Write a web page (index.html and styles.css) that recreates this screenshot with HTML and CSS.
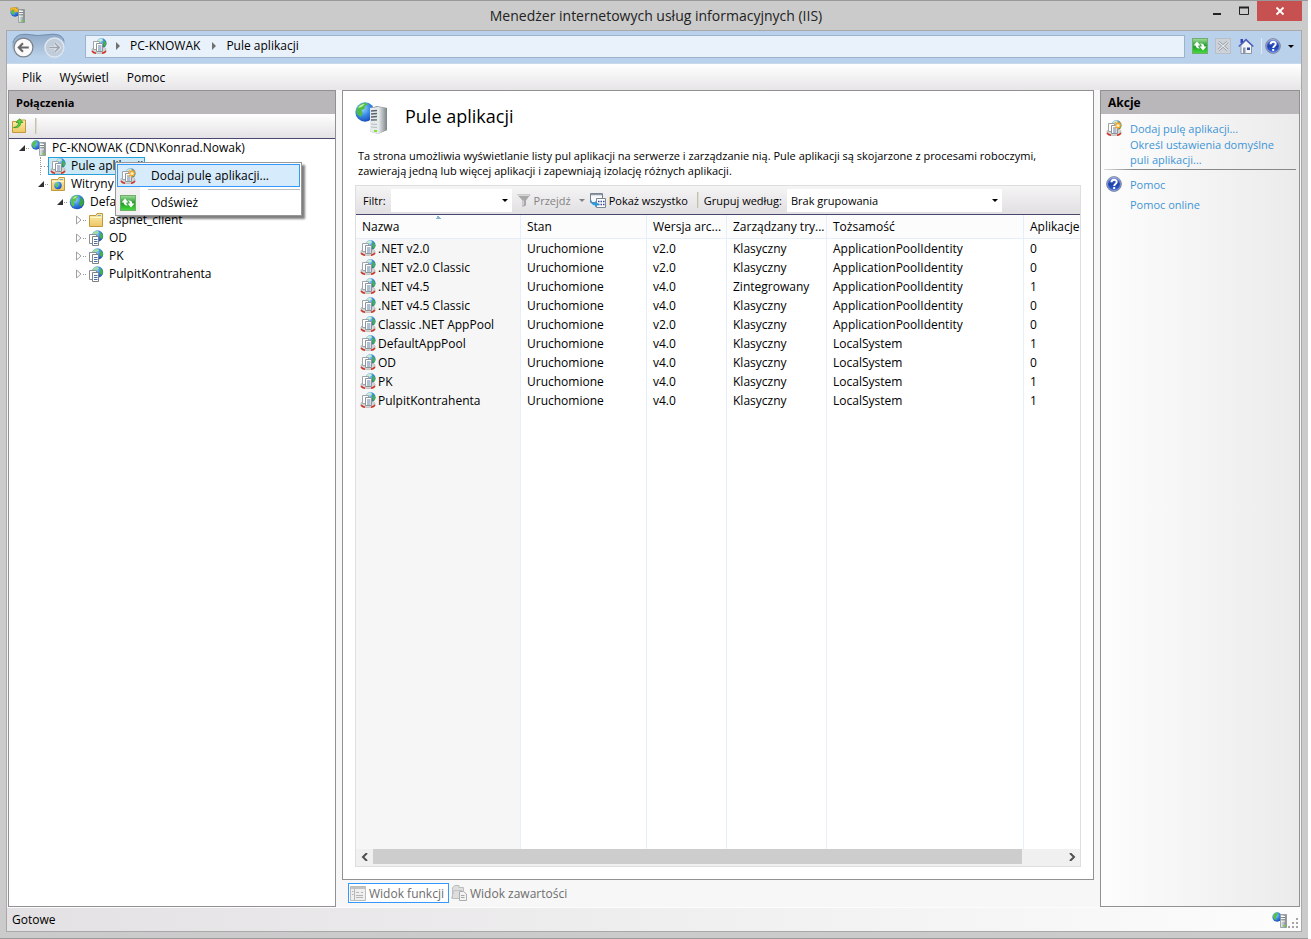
FILE: index.html
```html
<!DOCTYPE html>
<html lang="pl">
<head>
  <meta charset="UTF-8" />
  <meta name="viewport" content="width=device-width, initial-scale=1.0"/>
  <title>Menedżer internetowych usług informacyjnych (IIS)</title>
  <link rel="stylesheet" href="styles.css">
</head>
<body>
  <svg class="sprite" aria-hidden="true">
    <defs>
      <radialGradient id="sea" cx="0.35" cy="0.3" r="0.8">
        <stop offset="0" stop-color="#a5e0ff"/>
        <stop offset="0.5" stop-color="#3a8ae6"/>
        <stop offset="1" stop-color="#1240b4"/>
      </radialGradient>
      <linearGradient id="steel" x1="0" x2="1">
        <stop offset="0" stop-color="#eef1f3"/>
        <stop offset="0.5" stop-color="#b4babd"/>
        <stop offset="1" stop-color="#7b8284"/>
      </linearGradient>
      <linearGradient id="folderFill" x1="0" y1="0" x2="0" y2="1">
        <stop offset="0" stop-color="#fdeeae"/>
        <stop offset="1" stop-color="#ecc664"/>
      </linearGradient>
      <linearGradient id="greenFill" x1="0" y1="0" x2="0" y2="1">
        <stop offset="0" stop-color="#a5dd9f"/>
        <stop offset="0.5" stop-color="#1f9a28"/>
        <stop offset="1" stop-color="#45dd3c"/>
      </linearGradient>
      <linearGradient id="helpFill" x1="0" y1="0" x2="0" y2="1">
        <stop offset="0" stop-color="#7490e0"/>
        <stop offset="0.5" stop-color="#1c3fae"/>
        <stop offset="1" stop-color="#3b66d8"/>
      </linearGradient>
      <linearGradient id="capsuleFill" x1="0" y1="0" x2="0" y2="1">
        <stop offset="0" stop-color="#8fa9c8"/>
        <stop offset="0.5" stop-color="#a6bed9"/>
        <stop offset="1" stop-color="#c0d6ed"/>
      </linearGradient>
    </defs>
    <symbol id="globe" viewBox="0 0 16 16">
      <circle cx="8" cy="8" r="7.3" fill="url(#sea)"/>
      <path d="M2 5.500C3 2.500 6 1 8.500 1.200L9.500 3 7.500 4.500 7 7 4.500 7.500 5.500 10 4.500 13 2 10Z" fill="#5cc24a"/>
      <path d="M11 2.500 14 5.500 15 8.500 12.500 12.500 10.500 11.500 10 8.500 11.500 6.500Z" fill="#3aa53a"/>
      <path d="M3.500 5C5 2.500 7 2 8.500 2.200L6.500 4Z" fill="#d2f2b8"/>
    </symbol>
    <symbol id="server" viewBox="0 0 16 16">
      <circle cx="5" cy="5" r="4.700" fill="url(#sea)"/>
      <path d="M1 4C2 1.500 4 .5 6 .6L5.500 3 4 5 4.500 8 2 7Z" fill="#58c04a"/>
      <path d="M8.500 2.500H14.500V15.500H8.500Z" fill="url(#steel)" stroke="#8d9396" stroke-width=".8"/>
      <path d="M9 4.500H13M9 6.700H13M9 9H13" stroke="#fff"/>
      <path d="M9 5.500H13M9 7.800H13" stroke="#5f686c" stroke-width=".7"/>
      <rect x="11.500" y="13" width="2" height="1.500" fill="#5fe02a"/>
    </symbol>
    <symbol id="appicon" viewBox="0 0 16 16">
      <use href="#server"/>
      <path d="M0 1.500 5 0 7 2 8 0V5H3.500L5 3.500 3 2.500 1 4Z" fill="#f3b72e" stroke="#c98a10" stroke-width=".4"/>
    </symbol>
    <symbol id="serverbig" viewBox="0 0 32 33">
      <circle cx="10" cy="10" r="9.700" fill="url(#sea)"/>
      <path d="M1.500 8C3 3 7 .8 11 .8L13 2.500 10 4 9.500 7 6.500 8 7.500 12 5.500 15 2 12Z" fill="#4fbd43"/>
      <path d="M3 6C5 3 7 2 10 2L6.500 5Z" fill="#d0f3b8"/>
      <path d="M15 6 22 4 32 6V28L23 32 15 29.500Z" fill="#8b9294"/>
      <path d="M15 6 23 5V32L15 29.500Z" fill="#e5eaec"/>
      <path d="M23 5 32 6V28L23 32Z" fill="url(#steel)"/>
      <path d="M16 9 22 8.500M16 12 22 11.500M16 15 22 14.500M16 18 22 17.800" stroke="#59656b" stroke-width="1.300"/>
      <path d="M16 22 22 22.500M16 25 22 25.500" stroke="#b6bec2"/>
      <rect x="19" y="28" width="3" height="2" fill="#7be62d"/>
    </symbol>
    <symbol id="pages" viewBox="0 0 16 16">
      <path d="M1.500 4.500H8.500V13.500H1.500Z" fill="#fff" stroke="#8b9195"/>
      <path d="M4.500 6.500H10.500V15.500H4.500Z" fill="#fff" stroke="#7c8387"/>
      <path d="M6 9.500H9.500M6 11.500H9.500M6 13.500H9.500" stroke="#4c70a4"/>
    </symbol>
    <symbol id="pool" viewBox="0 0 16 16">
      <circle cx="10.500" cy="5.200" r="5" fill="url(#sea)"/>
      <path d="M5.700 4C7 1.500 9 .4 11 .4L12 2.500 9.500 3.500Z" fill="#c7ecd0"/>
      <path d="M12.500 2 15 4V8L12.500 9Z" fill="#43b247"/>
      <path d="M2.500 9.500C-1 12 1.500 15.500 8 15.500S17 12 13.500 9.500Z" fill="#d3d5d6" stroke="#a9a9a9" stroke-width=".6"/>
      <path d="M1 13C2 14.500 3 15 5 15.300M11 15.300C13 15 14 14.500 15 13" fill="none" stroke="#cf3527" stroke-width="1.500"/>
      <path d="M2.500 3.500H8.500V11.500H2.500Z" fill="#fff" stroke="#9fa4a8"/>
      <path d="M5.500 5.500H11.500V13.500H5.500Z" fill="#fff" stroke="#8e9498"/>
      <path d="M7 8H10.500M7 10H10.500M7 12H10.500" stroke="#4c6f9c" stroke-width=".9"/>
    </symbol>
    <symbol id="pooladd" viewBox="0 0 16 16">
      <use href="#pool"/>
      <path d="M12 0 12.800 3 15.500 1.800 14.200 4.300 16 5.500 14 6.500 15 9 12.700 7.800 12 10.500 11 7.800 8.500 9 9.800 6.500 8 5.500 9.800 4.400 8.600 1.800 11.200 3Z" fill="#f8a531"/>
      <circle cx="12" cy="5.500" r="1.600" fill="#fff0b4"/>
    </symbol>
    <symbol id="app" viewBox="0 0 16 16">
      <circle cx="9.500" cy="6" r="5.700" fill="url(#sea)"/>
      <path d="M4.500 4C6 1.500 8 .6 10 .7L11 3 8 4Z" fill="#9fdd9a"/>
      <path d="M12 2 15 5 14.500 9 12 8Z" fill="#43b247"/>
      <use href="#pages"/>
    </symbol>
    <symbol id="folder" viewBox="0 0 16 16">
      <path d="M1.500 3.500H8L9 1.500H14.500V14.500H1.500Z" fill="url(#folderFill)" stroke="#c29a3d"/>
      <path d="M9.500 3.500H13" stroke="#7fa8c4"/>
      <path d="M2 5.500H14" stroke="#fff6cf"/>
    </symbol>
    <symbol id="sites" viewBox="0 0 16 16">
      <use href="#folder"/>
      <circle cx="8" cy="9.500" r="3.700" fill="url(#sea)"/>
      <path d="M5 8.500 8 6.300 8.500 8.500 7 12Z" fill="#65ca4e"/>
    </symbol>
    <symbol id="connect" viewBox="0 0 16 16">
      <path d="M1.500 3.500H6L7 2H14.500V14.500H1.500Z" fill="url(#folderFill)" stroke="#c29a3d"/>
      <path d="M2.500 9.500C6 9 7.500 7 7.500 4.500H5L8.800.8 12 4.500H9.800C9.800 8 7 10.500 2.500 9.500Z" fill="#55d23c" stroke="#2d8f23" stroke-width=".7"/>
    </symbol>
    <symbol id="refresh" viewBox="0 0 16 16">
      <rect x=".5" y=".5" width="15" height="15" fill="url(#greenFill)" stroke="#6fae6c"/>
      <path d="M1.500 7.500 5 3.500 8.500 7.500H6.300C6.300 9 7 9.800 8 10.300 5.500 10.800 3.700 9.600 3.700 7.500Z" fill="#fff"/>
      <path d="M14.500 8.500 11 12.500 7.500 8.500H9.700C9.700 7 9 6.200 8 5.700 10.500 5.200 12.300 6.400 12.300 8.500Z" fill="#fff"/>
    </symbol>
    <symbol id="stop" viewBox="0 0 16 16">
      <rect x=".5" y=".5" width="15" height="15" fill="#cdd2d8" stroke="#b7bfc9"/>
      <path d="M3.500 4 12.500 12M12.500 4 3.500 12" stroke="#9299a2" stroke-width="2.600"/>
      <path d="M3.500 4 12.500 12M12.500 4 3.500 12" stroke="#e5e8ec" stroke-width="1.200"/>
    </symbol>
    <symbol id="home" viewBox="0 0 16 16">
      <path d="M2.500 1H5V5H2.500Z" fill="#3443b8"/>
      <path d="M3 7.500 8 2.500 13.500 7.500V15.500H3Z" fill="#f3f5f8" stroke="#7d8594" stroke-width=".8"/>
      <path d="M.8 8.500 8 1.500 15.300 8.500" fill="none" stroke="#4a5cb8" stroke-width="1.500"/>
      <path d="M5 9.500H7.500V15H5Z" fill="#8d97ac"/>
      <path d="M9 9.500H12V12H9Z" fill="#2f48a0"/>
    </symbol>
    <symbol id="help" viewBox="0 0 16 16">
      <circle cx="8" cy="8" r="7.400" fill="url(#helpFill)" stroke="#8b919d"/>
      <circle cx="8" cy="8" r="6.400" fill="none" stroke="#c7d2f0" stroke-width=".6"/>
      <path d="M5.500 6.300C5.500 3 10.700 3 10.700 6 10.700 8 8.200 7.900 8.200 10" fill="none" stroke="#fff" stroke-width="1.900"/>
      <rect x="7.200" y="11" width="2" height="2" fill="#fff"/>
    </symbol>
    <symbol id="funnel" viewBox="0 0 16 16">
      <path d="M1 2.500H14.500L10 8.500V13.500L6.500 15V8.500Z" fill="#a8a8a8"/>
      <path d="M2 3.500H13" stroke="#d5d5d5"/>
      <path d="M7.500 8.500V13.500" stroke="#d0d0d0"/>
    </symbol>
    <symbol id="showall" viewBox="0 0 16 16">
      <path d="M.5 1.500H12.500V10.500H.5Z" fill="#f7f9fb" stroke="#73808a"/>
      <path d="M1 2.500H12" stroke="#8f9ba4" stroke-width="1.500"/>
      <path d="M6.500 6.500H15.500V15.500H6.500Z" fill="#fff" stroke="#7b8792"/>
      <path d="M8 9.500H14.500M8 12.500H14.500" stroke="#33449a" stroke-width="1.500" stroke-dasharray="1.500 1"/>
      <path d="M1 7.500C1.500 10 3 11 5 11V9L9 12.200 5 15.300V13.300C2 13.200.5 11 1 7.500Z" fill="#2b9bdc"/>
    </symbol>
    <symbol id="features" viewBox="0 0 16 16">
      <path d="M.5 1.500H15.500V15.500H.5Z" fill="#efefef" stroke="#bdbdbd"/>
      <path d="M.5 3H15.500" stroke="#c2c2c2" stroke-width="2"/>
      <path d="M4.500 4V15M6 7.500H9M6 10.500H13M6 12.500H13M11 7.500H13M2 6.500H3.500M2 9.500H3.500" stroke="#b5b5b5"/>
    </symbol>
    <symbol id="content" viewBox="0 0 16 16">
      <path d="M1.500 13.500V2.500L4 .5H8V2.500H12.500V13.500Z" fill="#dedede" stroke="#bdbdbd"/>
      <path d="M.5 13.500 3 5.500H11" fill="none" stroke="#c2c2c2"/>
      <path d="M8.500 6.500H12.500L15.500 9V15.500H8.500Z" fill="#f3f3f3" stroke="#adadad"/>
      <path d="M10 10.500H13.500M10 12.500H13.500" stroke="#a5a5a5"/>
    </symbol>
    <symbol id="closed" viewBox="0 0 8 10">
      <path d="M1.500 1 6 5 1.500 9Z" fill="#fff" stroke="#a0a0a0"/>
    </symbol>
    <symbol id="open" viewBox="0 0 8 10">
      <path d="M7 2V8H1Z" fill="#303030"/>
    </symbol>
  </svg>

  <div class="window">
    <header class="titlebar">
      <svg class="icon"><use href="#appicon"/></svg>
      <h1>Menedżer internetowych usług informacyjnych (IIS)</h1>
      <div class="controls">
        <button type="button" aria-label="Minimalizuj"><svg viewBox="0 0 12 12"><path d="M2 9H10" stroke="#222" stroke-width="2"/></svg></button>
        <button type="button" aria-label="Maksymalizuj"><svg viewBox="0 0 12 12"><path d="M1.500 3V9.500H10.500V3" fill="none" stroke="#222"/><path d="M1 2.500H11" stroke="#222" stroke-width="2"/></svg></button>
        <button type="button" class="close" aria-label="Zamknij"><svg viewBox="0 0 12 12"><path d="M2.500 2.500 9.500 9.500M9.500 2.500 2.500 9.500" stroke="#fff" stroke-width="1.800"/></svg></button>
      </div>
    </header>

    <div class="client">
      <div class="navbar">
        <div class="history">
          <svg class="capsule" viewBox="0 0 55 27"><path d="M12 1C18 0 21 2 27 2S38 0 45 1C53 2 54 8 54 13 54 21 49 26 43 26 36 26 34 23 27 23S19 26 12 26C5 26 1 20 1 13S5 2 12 1Z" fill="url(#capsuleFill)"/><path d="M2 10C4 3 8 1.500 12 1.500 18 1 21 2.500 27 2.500S38 1 45 1.500C49 2 52 4 53 8" fill="none" stroke="#7590b2"/></svg>
          <div class="history-buttons">
            <button type="button" aria-label="Wstecz"><svg viewBox="0 0 20 20"><circle cx="10" cy="10" r="9" fill="#fafafa" stroke="#7b838c" stroke-width="1.200"/><path d="M15 10H6M9.500 6 5.500 10 9.500 14" fill="none" stroke="#666" stroke-width="2"/></svg></button>
            <button type="button" aria-label="Dalej" disabled><svg viewBox="0 0 20 20"><circle cx="10" cy="10" r="9" fill="#c0ccd9" stroke="#dde5ee" stroke-width="1.500"/><path d="M5 10H14M10.500 6 14.500 10 10.500 14" fill="none" stroke="#e6ebf0" stroke-width="3"/><path d="M5 10H14M10.500 6 14.500 10 10.500 14" fill="none" stroke="#9ba4ad" stroke-width="1.500"/></svg></button>
          </div>
        </div>
        <nav class="address">
          <svg class="icon"><use href="#pool"/></svg>
          <i class="crumb"></i>
          <a href="#">PC-KNOWAK</a>
          <i class="crumb"></i>
          <a href="#">Pule aplikacji</a>
        </nav>
        <div class="nav-tools">
          <button type="button" aria-label="Odśwież"><svg class="icon"><use href="#refresh"/></svg></button>
          <button type="button" aria-label="Zatrzymaj" disabled><svg class="icon"><use href="#stop"/></svg></button>
          <button type="button" aria-label="Strona główna"><svg class="icon"><use href="#home"/></svg></button>
          <button type="button" class="help-btn" aria-label="Pomoc"><svg class="icon"><use href="#help"/></svg><i class="caret"></i></button>
        </div>
      </div>

      <nav class="menubar">
        <button type="button">Plik</button>
        <button type="button">Wyświetl</button>
        <button type="button">Pomoc</button>
      </nav>

      <div class="panes">
        <aside class="pane connections">
          <h2>Połączenia</h2>
          <div class="pane-toolbar">
            <button type="button" aria-label="Połącz"><svg class="icon"><use href="#connect"/></svg></button>
            <i class="separator"></i>
          </div>
          <ul class="tree">
            <li>
              <div class="row"><svg class="expander"><use href="#open"/></svg><i class="dots"></i><a href="#" class="node"><svg class="icon"><use href="#server"/></svg>PC-KNOWAK (CDN\Konrad.Nowak)</a></div>
              <ul>
                <li>
                  <div class="row leaf"><i class="dots"></i><a href="#" class="node selected"><svg class="icon"><use href="#pool"/></svg>Pule aplikacji</a>
                    <div class="context-menu">
                      <button type="button" class="active"><svg class="icon"><use href="#pooladd"/></svg>Dodaj pulę aplikacji...</button>
                      <hr>
                      <button type="button"><svg class="icon"><use href="#refresh"/></svg>Odśwież</button>
                    </div>
                  </div>
                </li>
                <li>
                  <div class="row"><svg class="expander"><use href="#open"/></svg><i class="dots"></i><a href="#" class="node"><svg class="icon"><use href="#sites"/></svg>Witryny</a></div>
                  <ul>
                    <li>
                      <div class="row"><svg class="expander"><use href="#open"/></svg><i class="dots"></i><a href="#" class="node"><svg class="icon"><use href="#globe"/></svg>Default</a></div>
                      <ul>
                        <li><div class="row"><svg class="expander"><use href="#closed"/></svg><i class="dots"></i><a href="#" class="node"><svg class="icon"><use href="#folder"/></svg>aspnet_client</a></div></li>
                        <li><div class="row"><svg class="expander"><use href="#closed"/></svg><i class="dots"></i><a href="#" class="node"><svg class="icon"><use href="#app"/></svg>OD</a></div></li>
                        <li><div class="row"><svg class="expander"><use href="#closed"/></svg><i class="dots"></i><a href="#" class="node"><svg class="icon"><use href="#app"/></svg>PK</a></div></li>
                        <li><div class="row"><svg class="expander"><use href="#closed"/></svg><i class="dots"></i><a href="#" class="node"><svg class="icon"><use href="#app"/></svg>PulpitKontrahenta</a></div></li>
                      </ul>
                    </li>
                  </ul>
                </li>
              </ul>
            </li>
          </ul>
        </aside>

        <main class="center">
          <section class="pane feature">
            <div class="feature-title">
              <svg class="icon-big"><use href="#serverbig"/></svg>
              <h2>Pule aplikacji</h2>
            </div>
            <p>Ta strona umożliwia wyświetlanie listy pul aplikacji na serwerze i zarządzanie nią. Pule aplikacji są skojarzone z procesami roboczymi, zawierają jedną lub więcej aplikacji i zapewniają izolację różnych aplikacji.</p>

            <div class="list">
              <div class="list-toolbar">
                <label for="filter">Filtr:</label>
                <span class="combo filter"><input type="text" id="filter"><i class="caret"></i></span>
                <button type="button" class="go" disabled><svg class="icon"><use href="#funnel"/></svg>Przejdź<i class="caret"></i></button>
                <button type="button" class="show-all"><svg class="icon"><use href="#showall"/></svg>Pokaż wszystko</button>
                <i class="separator"></i>
                <label for="group">Grupuj według:</label>
                <span class="combo group"><select id="group"><option>Brak grupowania</option></select><i class="caret"></i></span>
              </div>
              <div class="table-wrap">
                <table>
                  <colgroup>
                    <col class="c-name"><col class="c-state"><col class="c-version"><col class="c-mode"><col class="c-identity"><col>
                  </colgroup>
                  <thead>
                    <tr><th class="sorted">Nazwa</th><th>Stan</th><th>Wersja arc...</th><th>Zarządzany try...</th><th>Tożsamość</th><th>Aplikacje</th></tr>
                  </thead>
                  <tbody>
                    <tr><td><svg class="icon"><use href="#pool"/></svg>.NET v2.0</td><td>Uruchomione</td><td>v2.0</td><td>Klasyczny</td><td>ApplicationPoolIdentity</td><td>0</td></tr>
                    <tr><td><svg class="icon"><use href="#pool"/></svg>.NET v2.0 Classic</td><td>Uruchomione</td><td>v2.0</td><td>Klasyczny</td><td>ApplicationPoolIdentity</td><td>0</td></tr>
                    <tr><td><svg class="icon"><use href="#pool"/></svg>.NET v4.5</td><td>Uruchomione</td><td>v4.0</td><td>Zintegrowany</td><td>ApplicationPoolIdentity</td><td>1</td></tr>
                    <tr><td><svg class="icon"><use href="#pool"/></svg>.NET v4.5 Classic</td><td>Uruchomione</td><td>v4.0</td><td>Klasyczny</td><td>ApplicationPoolIdentity</td><td>0</td></tr>
                    <tr><td><svg class="icon"><use href="#pool"/></svg>Classic .NET AppPool</td><td>Uruchomione</td><td>v2.0</td><td>Klasyczny</td><td>ApplicationPoolIdentity</td><td>0</td></tr>
                    <tr><td><svg class="icon"><use href="#pool"/></svg>DefaultAppPool</td><td>Uruchomione</td><td>v4.0</td><td>Klasyczny</td><td>LocalSystem</td><td>1</td></tr>
                    <tr><td><svg class="icon"><use href="#pool"/></svg>OD</td><td>Uruchomione</td><td>v4.0</td><td>Klasyczny</td><td>LocalSystem</td><td>0</td></tr>
                    <tr><td><svg class="icon"><use href="#pool"/></svg>PK</td><td>Uruchomione</td><td>v4.0</td><td>Klasyczny</td><td>LocalSystem</td><td>1</td></tr>
                    <tr><td><svg class="icon"><use href="#pool"/></svg>PulpitKontrahenta</td><td>Uruchomione</td><td>v4.0</td><td>Klasyczny</td><td>LocalSystem</td><td>1</td></tr>
                    <tr class="rest"><td></td><td></td><td></td><td></td><td></td><td></td></tr>
                  </tbody>
                </table>
              </div>
              <div class="scrollbar">
                <button type="button" aria-label="W lewo"><svg viewBox="0 0 8 8"><path d="M6 0 2 4 6 8" fill="none" stroke="#505050" stroke-width="2"/></svg></button>
                <div class="track"><div class="thumb"></div></div>
                <button type="button" aria-label="W prawo"><svg viewBox="0 0 8 8"><path d="M2 0 6 4 2 8" fill="none" stroke="#505050" stroke-width="2"/></svg></button>
              </div>
            </div>
          </section>
          <div class="views">
            <button type="button" class="current"><svg class="icon"><use href="#features"/></svg>Widok funkcji</button>
            <button type="button"><svg class="icon"><use href="#content"/></svg>Widok zawartości</button>
          </div>
        </main>

        <aside class="pane actions">
          <h2>Akcje</h2>
          <div class="action-group">
            <svg class="icon"><use href="#pooladd"/></svg>
            <a href="#">Dodaj pulę aplikacji...</a>
            <a href="#" class="wide">Określ ustawienia domyślne puli aplikacji...</a>
          </div>
          <hr>
          <div class="action-group">
            <svg class="icon"><use href="#help"/></svg>
            <a href="#">Pomoc</a>
            <a href="#" class="wide spaced">Pomoc online</a>
          </div>
        </aside>
      </div>

      <footer class="statusbar">
        <span>Gotowe</span>
        <svg class="icon"><use href="#server"/></svg>
        <svg class="grip" viewBox="0 0 10 10"><path d="M8 0H10V2H8ZM8 4H10V6H8ZM4 4H6V6H4ZM8 8H10V10H8ZM4 8H6V10H4ZM0 8H2V10H0Z" fill="#a5a5a5"/></svg>
      </footer>
    </div>
  </div>
</body>
</html>
```
FILE: styles.css
```css
* {
  box-sizing: border-box;
}

body {
  margin: 0;
  padding-right: 3px;
  height: 100vh;
  background: #fff;
  color: #000;
  font-family: 'Segoe UI', 'Open Sans', 'Noto Sans', sans-serif;
  font-size: 12px;
  line-height: 15px;
}

h1, h2, p, ul {
  margin: 0;
  padding: 0;
  font-weight: normal;
}

button, input, select {
  margin: 0;
  padding: 0;
  border: none;
  background: none;
  color: inherit;
  font: inherit;
}

button {
  display: flex;
  align-items: center;
}

a {
  color: inherit;
  text-decoration: none;
}

.sprite {
  position: absolute;
  width: 0;
  height: 0;
}

.icon {
  flex: none;
  width: 16px;
  height: 16px;
}

.caret {
  border: 3px solid transparent;
  border-top-color: #000;
  border-bottom: none;
}

.separator {
  width: 2px;
  height: 16px;
  border-left: 1px solid #c4c2a8;
  border-right: 1px solid #dddcd0;
}

/* window frame */
.window {
  display: flex;
  flex-direction: column;
  height: 100%;
  padding: 0 6px 6px;
  background: #cbcbcb;
  border-top: 1px solid #999;
  border-bottom: 1px solid #999;
}

.titlebar {
  display: grid;
  grid-template-columns: 1fr auto 1fr;
  height: 29px;
  padding-left: 4px;
}

.titlebar .icon {
  margin-top: 6px;
}

.titlebar h1 {
  font-size: 14px;
  line-height: 29px;
  color: #222;
}

.controls {
  display: flex;
  justify-content: flex-end;
  align-items: flex-start;
}

.controls button {
  justify-content: center;
  width: 27px;
  height: 20px;
}

.controls svg {
  width: 12px;
  height: 12px;
}

.controls .close {
  width: 45px;
  background: #c75050;
}

.client {
  flex: 1;
  min-height: 0;
  display: flex;
  flex-direction: column;
  border: 1px solid #a9a9a9;
  background: #f7f7f7;
}

/* address bar */
.navbar {
  display: flex;
  align-items: center;
  height: 33px;
  padding: 0 7px 2px 4px;
  background: #b9d1ea;
  border-bottom: 1px solid #c8d9ec;
}

.history {
  display: grid;
  width: 55px;
  height: 27px;
}

.capsule,
.history-buttons {
  grid-area: 1 / 1;
}

.history-buttons {
  display: flex;
  align-items: center;
  justify-content: space-between;
  padding: 3px 1px 0 2px;
}

.history-buttons svg {
  width: 21px;
  height: 21px;
}

.address {
  flex: 1;
  display: flex;
  align-items: center;
  height: 23px;
  margin-left: 19px;
  padding: 0 5px;
  line-height: 13px;
  background: #e9f1fa;
  border: 1px solid #9db3cc;
}

.address a {
  margin-right: 3px;
  padding-bottom: 1px;
}

.crumb {
  margin: 0 10px 0 9px;
  border: 4px solid transparent;
  border-left-color: #707070;
  border-right: none;
}

.nav-tools {
  display: flex;
  align-items: center;
  gap: 7px;
  margin-left: 7px;
}

.help-btn {
  gap: 7px;
  padding-left: 3px;
  border-left: 1px solid #dfe9f3;
}

.menubar {
  display: flex;
  gap: 18px;
  height: 26px;
  padding: 0 15px;
  background: linear-gradient(#fff, #e7e5e7);
}

/* three panes */
.panes {
  flex: 1;
  min-height: 0;
  display: grid;
  grid-template-columns: 328px 1fr 200px;
  gap: 6px;
  padding: 0 1px;
}

.pane {
  border: 1px solid #919191;
  background: #fff;
}

.connections h2,
.actions h2 {
  height: 23px;
  padding: 0 7px;
  background: #bab7ba;
  font-size: 12px;
  font-weight: bold;
  line-height: 23px;
}

.connections h2 {
  font-size: 11px;
}

.pane-toolbar {
  display: flex;
  align-items: center;
  gap: 8px;
  height: 25px;
  padding: 0 2px;
  background: linear-gradient(#fff, #e4e2e4);
  border-bottom: 1px solid #47476f;
}

.tree ul {
  padding-left: 19px;
}

.tree li {
  list-style: none;
}

.row {
  position: relative;
  display: flex;
  align-items: center;
  height: 18px;
  padding-left: 9px;
}

.row.leaf {
  padding-left: 12px;
}

.expander {
  flex: none;
  width: 8px;
  height: 10px;
}

.dots {
  width: 3px;
  border-top: 1px dotted #999;
}

.row.leaf .dots {
  width: 8px;
  height: 18px;
  border-top: none;
  border-left: 1px dotted #999;
  background: repeating-linear-gradient(90deg, #999 0 1px, transparent 1px 3px) 0 9px / 100% 1px no-repeat;
}

.node {
  display: flex;
  align-items: center;
  gap: 5px;
  height: 18px;
  padding: 0 1px;
  border: 1px solid transparent;
  line-height: 14px;
  white-space: nowrap;
}

.node.selected {
  background: #cbe8f6;
  border-color: #26a0da;
}

.context-menu {
  position: absolute;
  z-index: 2;
  left: 87px;
  top: 5px;
  width: 187px;
  padding: 1px;
  border: 1px solid #979797;
  background: linear-gradient(90deg, #f1f1f1 24px, #fff 24px);
  box-shadow: 3px 3px 2px rgba(0, 0, 0, 0.5);
}

.context-menu button {
  gap: 15px;
  width: 100%;
  height: 23px;
  padding: 0 2px;
  border: 1px solid transparent;
}

.context-menu .active {
  background: #d6ebfb;
  border-color: #3399ff;
}

.context-menu hr {
  margin: 2px 0 1px 31px;
  border: none;
  border-top: 1px solid #bdbdbd;
}

/* application pools */
.center {
  display: flex;
  flex-direction: column;
  min-width: 0;
  min-height: 0;
}

.feature {
  flex: 1;
  min-height: 0;
  display: flex;
  flex-direction: column;
  padding: 11px 12px 12px;
}

.feature-title {
  display: flex;
  gap: 18px;
}

.icon-big {
  width: 32px;
  height: 33px;
}

.feature-title h2 {
  font-size: 18px;
  line-height: 29px;
}

.feature p {
  margin: 13px 3px 7px;
  font-size: 11px;
}

.list {
  flex: 1;
  min-height: 0;
  display: flex;
  flex-direction: column;
  border: 1px solid #dedede;
}

.list-toolbar {
  display: flex;
  align-items: center;
  height: 29px;
  padding-left: 7px;
  background: linear-gradient(#f6f5f6, #e1dfe1);
  border-bottom: 1px solid #47476f;
  font-size: 11px;
  white-space: nowrap;
}

.combo {
  display: flex;
  align-items: center;
  height: 23px;
  margin-left: 5px;
  padding-right: 4px;
  background: #fff;
}

.combo input,
.combo select {
  flex: 1;
  min-width: 0;
  appearance: none;
  outline: none;
}

.combo select {
  padding-left: 4px;
}

.filter {
  width: 121px;
}

.group {
  width: 215px;
}

.go {
  gap: 2px;
  margin-left: 4px;
  color: #838383;
}

.go .caret {
  margin-left: 6px;
  border-top-color: #838383;
}

.show-all {
  gap: 3px;
  margin: 0 9px 0 5px;
}

.list-toolbar .separator {
  margin-right: 5px;
}

.table-wrap {
  flex: 1;
  min-height: 0;
}

table {
  width: 100%;
  height: 100%;
  table-layout: fixed;
  border-collapse: separate;
  border-spacing: 0;
}

.c-name { width: 165px; }
.c-state { width: 126px; }
.c-version { width: 80px; }
.c-mode { width: 100px; }
.c-identity { width: 197px; }

th, td {
  height: 19px;
  padding: 0 0 0 6px;
  border-right: 1px solid #e5eefb;
  font-weight: normal;
  text-align: left;
  white-space: nowrap;
}

th {
  height: 24px;
  background: #fcfcfc;
  border-bottom: 1px solid #e5eefb;
}

th:last-child,
td:last-child {
  border-right: none;
}

td:first-child {
  padding-left: 4px;
  background: #f6f6f6;
}

td .icon {
  margin: -1px 2px -1px 0;
  vertical-align: top;
}

.rest td {
  height: auto;
}

.sorted {
  background: conic-gradient(from 135deg at 50% 0, #86b5d3 90deg, transparent 0) 50% 1px / 6px 3px no-repeat #fcfcfc;
}

.scrollbar {
  display: flex;
  height: 17px;
  padding-bottom: 2px;
  background: #f0f0f0;
}

.scrollbar button {
  justify-content: center;
  width: 17px;
}

.scrollbar svg {
  width: 8px;
  height: 8px;
}

.track {
  flex: 1;
}

.thumb {
  width: 94%;
  height: 100%;
  background: #cdcdcd;
}

.views {
  display: flex;
  height: 27px;
  padding: 3px 6px 4px;
  color: #6d6d6d;
}

.views button {
  gap: 3px;
  padding: 0 4px 0 1px;
  border: 1px solid transparent;
}

.views .current {
  border-color: #3399ff;
  background: #fff;
}

/* actions */
.actions {
  background: linear-gradient(90deg, #fdfdfd, #ebebeb);
}

.action-group {
  display: grid;
  grid-template-columns: 16px 1fr;
  column-gap: 8px;
  align-items: center;
  padding: 6px 5px 0;
  color: #3e95d6;
  font-size: 11px;
}

.action-group .wide {
  grid-column: 2;
  padding-top: 1px;
}

.action-group .spaced {
  padding-top: 5px;
}

.actions hr {
  height: 1px;
  margin: 2px 3px 0;
  border: none;
  background: linear-gradient(90deg, #ddd, #888 15%);
}

.statusbar {
  display: flex;
  align-items: center;
  height: 24px;
  padding: 0 3px 0 5px;
  border-top: 1px solid #fcfcfc;
  background: linear-gradient(90deg, #e3e1e3, #fcfcfc);
}

.statusbar span {
  flex: 1;
}

.grip {
  width: 10px;
  height: 10px;
  align-self: flex-end;
  margin-bottom: 3px;
}
```
